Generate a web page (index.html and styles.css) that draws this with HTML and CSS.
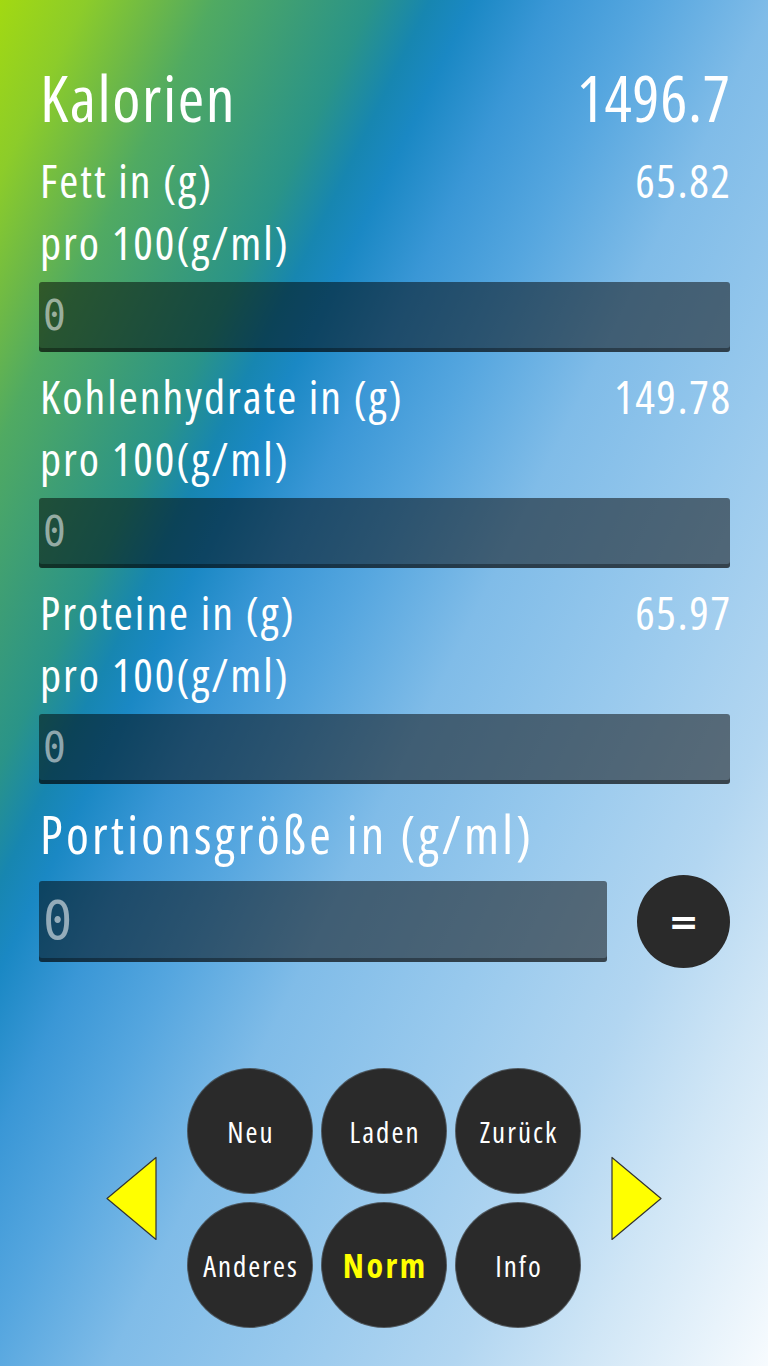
FILE: index.html
```html
<!DOCTYPE html>
<html lang="de">
<head>
<meta charset="utf-8">
<title>Kalorien</title>
<link rel="stylesheet" href="styles.css">
</head>
<body>
<div class="page">
  <div class="row row-head">
    <span class="title">Kalorien</span>
    <span class="title-num">1496.7</span>
  </div>

  <div class="sections">
    <section class="section">
      <div class="row row-label"><span>Fett in (g)</span><span class="num">65.82</span></div>
      <div class="row row-label"><span>pro 100(g/ml)</span></div>
      <div class="field"><span class="ph">0</span></div>
    </section>

    <section class="section">
      <div class="row row-label"><span>Kohlenhydrate in (g)</span><span class="num">149.78</span></div>
      <div class="row row-label"><span>pro 100(g/ml)</span></div>
      <div class="field"><span class="ph">0</span></div>
    </section>

    <section class="section">
      <div class="row row-label"><span>Proteine in (g)</span><span class="num">65.97</span></div>
      <div class="row row-label"><span>pro 100(g/ml)</span></div>
      <div class="field"><span class="ph">0</span></div>
    </section>

    <section class="section">
      <div class="row row-portion"><span>Portionsgröße in (g/ml)</span></div>
      <div class="portion-line">
        <div class="field field-big"><span class="ph ph-big">0</span></div>
        <div class="eq">=</div>
      </div>
    </section>
  </div>

  <div class="controls">
    <svg class="arrow" width="51" height="85" viewBox="0 0 51 85">
      <polygon points="1,42.5 50,1.5 50,83.5" fill="#ffff00" stroke="#333" stroke-width="1.2" stroke-linejoin="round"/>
    </svg>
    <div class="grid">
      <div class="btn">Neu</div>
      <div class="btn">Laden</div>
      <div class="btn">Zurück</div>
      <div class="btn">Anderes</div>
      <div class="btn btn-active">Norm</div>
      <div class="btn">Info</div>
    </div>
    <svg class="arrow" width="51" height="85" viewBox="0 0 51 85">
      <polygon points="1,1.5 1,83.5 50,42.5" fill="#ffff00" stroke="#333" stroke-width="1.2" stroke-linejoin="round"/>
    </svg>
  </div>
</div>
</body>
</html>
```
FILE: styles.css
```css
html, body {
  margin: 0;
  padding: 0;
}
body {
  width: 768px;
  height: 1366px;
  overflow: hidden;
  background: linear-gradient(116deg,
    #a2d912 0%,
    #8ccc2a 6%,
    #6cb848 11%,
    #50aa62 15%,
    #3a9c78 21.5%,
    #2a9488 26%,
    #1786b0 30%,
    #1a88c4 33%,
    #3a97d6 38.5%,
    #55a6df 45%,
    #80bce8 54%,
    #98c9ed 66%,
    #b2d6f1 78%,
    #d0e6f6 87%,
    #f7fbfe 100%);
  font-family: "Open Sans", "DejaVu Sans Condensed", sans-serif;
  font-stretch: 75%;
  color: #fff;
}
.page {
  padding: 60px 38px 0 39px;
}
.row {
  display: flex;
  justify-content: space-between;
  align-items: baseline;
  white-space: nowrap;
}
.row-head {
  height: 80px;
  line-height: 75px;
  font-size: 64px;
}
.title {
  padding-left: 1px;
  letter-spacing: 1.6px;
}
.title-num {
  letter-spacing: 0.6px;
  margin-right: -0.6px;
}
.num {
  letter-spacing: 1.6px;
  margin-right: -1.6px;
}
.sections {
  display: flex;
  flex-direction: column;
  gap: 15px;
  margin-top: 11px;
}
.section {
  display: flex;
  flex-direction: column;
}
.row-label {
  height: 62px;
  line-height: 58px;
  font-size: 46px;
  letter-spacing: 2px;
  padding-left: 1px;
}
.row-portion {
  height: 75px;
  line-height: 70px;
  font-size: 52px;
  letter-spacing: 3.2px;
  padding-left: 1px;
}
.field {
  margin-top: 7px;
  height: 70px;
  border-radius: 3px;
  background: rgba(0, 0, 0, 0.5);
  box-shadow: inset 0 -4px 0 rgba(0, 0, 0, 0.35);
  display: flex;
  align-items: center;
  padding-left: 4px;
  box-sizing: border-box;
  letter-spacing: 0;
}
.ph {
  font-family: "DejaVu Sans Mono", "Liberation Mono", monospace;
  font-stretch: normal;
  font-size: 42px;
  color: rgba(255, 255, 255, 0.55);
  line-height: 1;
  margin-top: -2px;
  display: inline-block;
  transform: scaleX(0.9);
  transform-origin: left center;
}
.portion-line {
  display: flex;
  align-items: center;
  justify-content: space-between;
  margin-top: 1px;
}
.field-big {
  margin-top: 0;
  width: 568px;
  height: 81px;
}
.ph-big {
  font-size: 54px;
}
.eq {
  width: 93px;
  height: 93px;
  border-radius: 50%;
  background: #2a2a2a;
  display: flex;
  align-items: center;
  justify-content: center;
  font-family: "DejaVu Sans", sans-serif;
  font-stretch: normal;
  font-weight: bold;
  font-size: 36px;
  line-height: 1;
  color: #fff;
}
.controls {
  margin-top: 101px;
  margin-left: -39px;
  margin-right: -38px;
  display: flex;
  justify-content: center;
  align-items: center;
  gap: 31px;
}
.arrow {
  display: block;
}
.grid {
  display: grid;
  grid-template-columns: repeat(3, 124px);
  grid-auto-rows: 124px;
  gap: 10px;
}
.btn {
  border-radius: 50%;
  background: #2a2a2a;
  box-shadow: 0 0 0 1px rgba(60, 60, 60, 0.8);
  display: flex;
  align-items: center;
  justify-content: center;
  font-size: 29px;
  letter-spacing: 2px;
  padding-left: 2px;
  color: #fff;
}
.btn-active {
  color: #ffff00;
  font-weight: bold;
  font-size: 34px;
  letter-spacing: 2.5px;
  padding-left: 2.5px;
}
```
